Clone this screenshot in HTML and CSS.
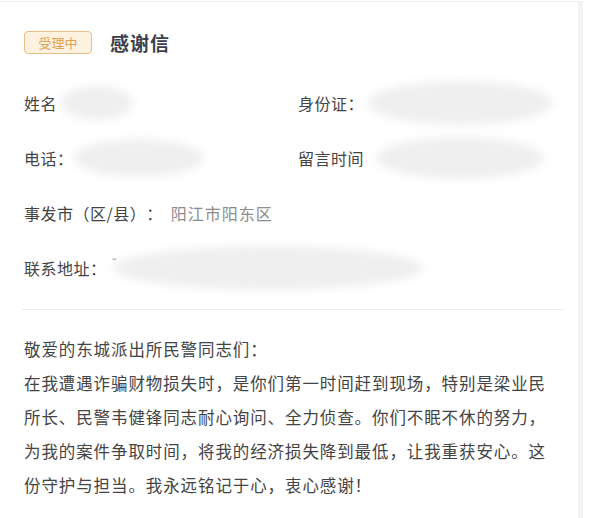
FILE: index.html
```html
<!DOCTYPE html>
<html lang="zh-CN">
<head>
    <meta charset="UTF-8">
    <meta name="viewport" content="width=device-width, initial-scale=1.0">
    <title>感谢信</title>
    <link rel="stylesheet" href="styles.css">
</head>
<body>
    <!--CARTE-->
    <div class="card">
        <div class="head">
            <span class="badge">受理中</span>
            <span class="title">感谢信</span>
        </div>

        <div class="infos">
            <div class="row">
                <div class="cell">姓名<span class="mask mask-name"></span></div>
                <div class="cell">身份证：<span class="mask mask-id"></span></div>
            </div>
            <div class="row">
                <div class="cell">电话：<span class="mask mask-tel"></span></div>
                <div class="cell">留言时间<span class="mask mask-time"></span></div>
            </div>
            <div class="row">
                <div class="cell wide">事发市（区/县）：<span class="val">阳江市阳东区</span></div>
            </div>
            <div class="row">
                <div class="cell wide">联系地址：<span class="tick">˘</span><span class="mask mask-addr"></span></div>
            </div>
        </div>

        <div class="sep"></div>

        <div class="letter">
            <p>敬爱的东城派出所民警同志们：</p>
            <p>在我遭遇诈骗财物损失时，是你们第一时间赶到现场，特别是梁业民所长、民警韦健锋同志耐心询问、全力侦查。你们不眠不休的努力，为我的案件争取时间，将我的经济损失降到最低，让我重获安心。这份守护与担当。我永远铭记于心，衷心感谢！</p>
        </div>
    </div>
    <!--FIN CARTE-->
</body>
</html>
```

FILE: styles.css
```css
body{
    margin:0;
    background:#fff;
    font-family:"Noto Sans CJK SC", "Liberation Sans", sans-serif;
    color:#444;
    text-spacing-trim:space-all;
}

.card{
    width:583px;
    height:518px;
    box-sizing:border-box;
    border-top:1px solid #ececec;
    border-right:5px solid #f3f3f3;
    padding:0 0 0 24px;
    margin-top:1px;
    overflow:hidden;
}

.head{
    display:flex;
    align-items:center;
    gap:18px;
    padding-top:24px;
    box-sizing:border-box;
    height:56px;
}

.badge{
    display:inline-block;
    width:68px;
    height:23px;
    box-sizing:border-box;
    border:1px solid #ecbd85;
    border-radius:4px;
    background:#fdf1e0;
    color:#e3a04f;
    font-size:13px;
    line-height:21px;
    text-align:center;
}

.title{
    font-size:19px;
    font-weight:bold;
    color:#3b404c;
    letter-spacing:1px;
}

.infos{
    padding-top:17px;
}

.row{
    display:flex;
    height:55px;
    align-items:center;
}

.cell{
    display:flex;
    align-items:center;
    width:274px;
    font-size:16px;
    letter-spacing:0.5px;
    white-space:nowrap;
}

.cell.wide{
    width:auto;
}

.val{
    color:#8c8c8c;
    margin-left:8px;
    letter-spacing:1px;
}

.tick{
    color:#999;
    font-size:12px;
    margin:-10px 0 0 6px;
}

.mask{
    display:inline-block;
    flex-shrink:0;
    background:#efefef;
    border-radius:50%;
    filter:blur(4px);
}
.mask-name{ width:72px; height:34px; margin-left:4px; }
.mask-id{ width:185px; height:44px; margin-left:4px; }
.mask-tel{ width:130px; height:38px; margin-left:0; }
.mask-time{ width:168px; height:42px; margin-left:12px; }
.mask-addr{ width:310px; height:44px; margin-left:-4px; }

.sep{
    width:541px;
    margin:14px 0 0 -2px;
    border-top:1px solid #ebebeb;
}

.letter{
    width:535px;
    padding-top:22px;
    font-size:16.5px;
    line-height:34px;
    letter-spacing:0.9px;
    color:#444;
}

.letter p{
    margin:0;
}
```
